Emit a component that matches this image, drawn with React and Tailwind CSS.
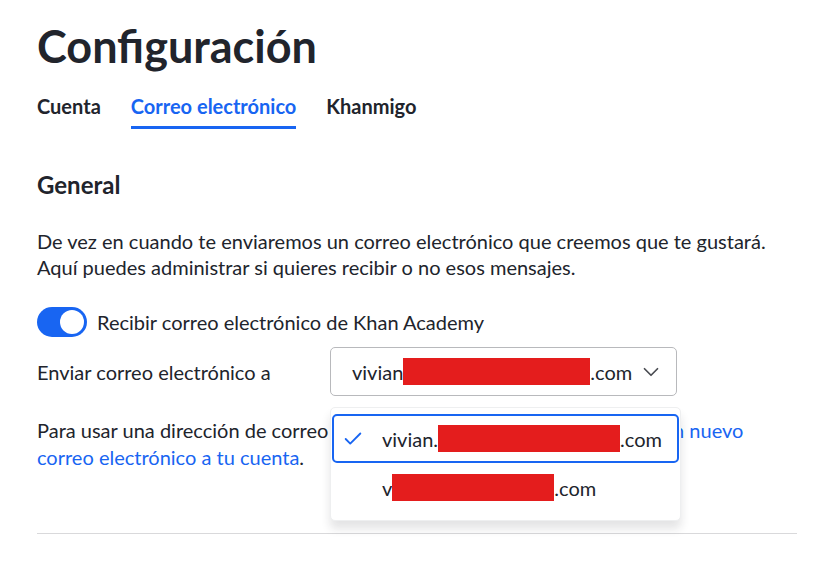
import { Check, ChevronDown } from "lucide-react";

const TEXT = "text-[#21242c]";

function Redacted({ w }) {
  return <span className={`inline-block h-[27px] bg-[#e41d1d] align-middle ${w}`} />;
}

export default function App() {
  return (
    <div className={`min-h-[566px] bg-white pl-[37px] pr-[20px] ${TEXT}`} style={{ fontFamily: "Lato, 'Noto Sans', sans-serif" }}>
      {/* Header */}
      <h1 className="pt-[18px] text-[45px] leading-[56px] font-bold">Configuración</h1>

      {/* Tabs */}
      <nav className="mt-[19px] flex gap-[30px] text-[20px] leading-[26px] font-bold">
        <span className="pb-[10px]">Cuenta</span>
        <span className="border-b-[3px] border-[#1865f2] pb-[7px] text-[#1865f2]">Correo electrónico</span>
        <span className="pb-[10px]">Khanmigo</span>
      </nav>

      {/* General */}
      <h2 className="mt-[42px] text-[24px] leading-[28px] font-bold">General</h2>
      <p className="mt-[29px] max-w-[750px] text-[20px] leading-[26px]">
        De vez en cuando te enviaremos un correo electrónico que creemos que te gustará. Aquí puedes administrar si quieres recibir o no esos mensajes.
      </p>

      <label className="mt-[27px] flex items-center gap-[10px] text-[20px] leading-[26px]">
        <span className="relative inline-flex h-[30px] w-[50px] items-center rounded-full bg-[#1865f2]">
          <span className="absolute right-[3px] h-[24px] w-[24px] rounded-full bg-white" />
        </span>
        Recibir correo electrónico de Khan Academy
      </label>

      <div className="mt-[10px] flex items-center text-[20px]">
        <span className="w-[293px]">Enviar correo electrónico a</span>
        <div className="relative">
          <button className="flex h-[49px] w-[347px] items-center rounded-[5px] border border-[#b8b9bc] pl-[21px] pr-[12px] text-[20px]">
            <span>vivian</span>
            <Redacted w="w-[187px]" />
            <span>.com</span>
            <ChevronDown className="ml-auto h-[26px] w-[26px] text-[#4a4c52]" strokeWidth={1.6} />
          </button>

          {/* Open dropdown */}
          <div className="absolute left-0 top-[60px] z-10 w-[351px] rounded-[5px] border border-[#eeeff0] bg-white pt-[6px] pb-[8px] shadow-[0_8px_10px_rgba(33,36,44,0.12)]">
            <div className="mx-[1px] flex h-[49px] items-center rounded-[5px] border-2 border-[#1865f2] pl-[8px]">
              <Check className="h-[22px] w-[22px] text-[#1865f2]" strokeWidth={2} />
              <span className="ml-[18px]">vivian.</span>
              <Redacted w="w-[182px]" />
              <span>.com</span>
            </div>
            <div className="flex h-[49px] items-center pl-[51px]">
              <span>v</span>
              <Redacted w="w-[162px]" />
              <span>.com</span>
            </div>
          </div>
        </div>
      </div>

      <p className="mt-[21px] max-w-[750px] text-[20px] leading-[27px]">
        Para usar una dirección de correo electrónico diferente, primero{" "}
        <a className="text-[#1865f2]">agrega un nuevo correo electrónico a tu cuenta</a>.
      </p>

      <div className="mt-[62px] h-[1px] bg-[#d9d9db]" />
    </div>
  );
}
